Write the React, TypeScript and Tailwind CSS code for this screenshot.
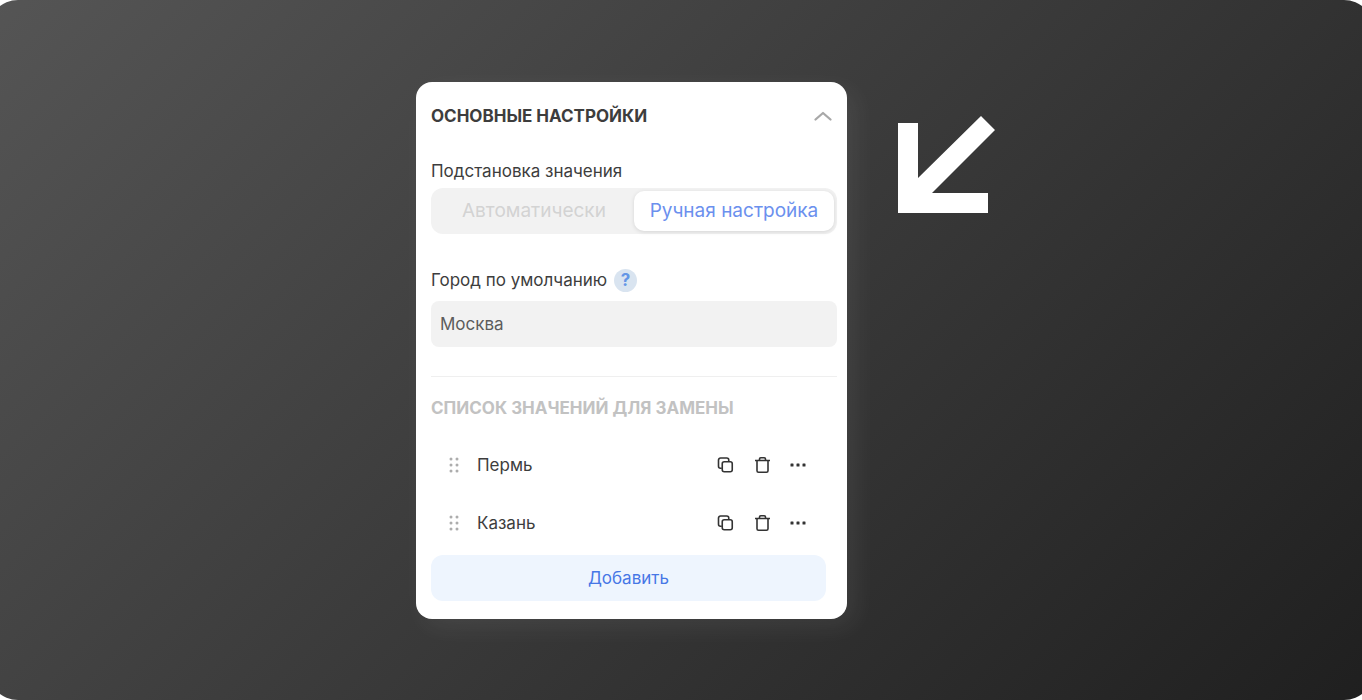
import { useState } from "react";

const CITIES = ["Пермь", "Казань"];

function ChevronUpIcon() {
  return (
    <svg width="20" height="12" viewBox="0 0 20 12" fill="none" aria-hidden>
      <path d="M2.5 9.5 10 3l7.5 6.5" stroke="#a8a8a8" strokeWidth="2.3" strokeLinecap="round" strokeLinejoin="round" />
    </svg>
  );
}

function CopyIcon() {
  return (
    <svg width="18" height="18" viewBox="0 0 18 18" fill="none" stroke="#333333" strokeWidth="1.6" aria-hidden>
      <rect x="5.25" y="5.75" width="10" height="10" rx="2" />
      <path d="M4.75 12.25H3.5a2 2 0 0 1-2-2V4a2 2 0 0 1 2-2h6.25a2 2 0 0 1 2 2v1.5" />
    </svg>
  );
}

function TrashIcon() {
  return (
    <svg width="18" height="18" viewBox="0 0 18 18" fill="none" stroke="#333333" strokeWidth="1.6" aria-hidden>
      <path d="M2 4.5h15M4 4.5v10.25a1.5 1.5 0 0 0 1.5 1.5h8a1.5 1.5 0 0 0 1.5-1.5V4.5" />
      <path d="M6.5 4.25V3a1.25 1.25 0 0 1 1.25-1.25h3.5A1.25 1.25 0 0 1 12.5 3v1.25" />
    </svg>
  );
}

function MoreIcon() {
  return (
    <svg width="18" height="18" viewBox="0 0 18 18" fill="#333333" aria-hidden>
      <rect x="1.5" y="7.5" width="3" height="3" rx="0.5" />
      <rect x="7.5" y="7.5" width="3" height="3" rx="0.5" />
      <rect x="13.5" y="7.5" width="3" height="3" rx="0.5" />
    </svg>
  );
}

function DragIcon() {
  return (
    <svg width="10" height="16" viewBox="0 0 10 16" fill="#adadad" aria-hidden>
      {[2, 8, 14].map((y) => (
        <g key={y}>
          <circle cx="2" cy={y} r="1.5" />
          <circle cx="8" cy={y} r="1.5" />
        </g>
      ))}
    </svg>
  );
}

function CityRow({ name }: { name: string }) {
  return (
    <li className="flex h-[58px] items-center pr-[30px] pl-[18px]">
      <button type="button" aria-label="Переместить" className="cursor-grab">
        <DragIcon />
      </button>
      <span className="ml-[18px] flex-1">{name}</span>
      <div className="flex gap-[18px]">
        <button type="button" aria-label="Копировать">
          <CopyIcon />
        </button>
        <button type="button" aria-label="Удалить">
          <TrashIcon />
        </button>
        <button type="button" aria-label="Ещё">
          <MoreIcon />
        </button>
      </div>
    </li>
  );
}

export default function App() {
  const [manual, setManual] = useState(true);
  const [city, setCity] = useState("Москва");

  return (
    <div className="overflow-hidden bg-white font-['Inter',sans-serif]">
      <main className="-mx-3 grid min-h-screen grid-cols-[21fr_431px_26fr] items-start rounded-[30px] bg-[linear-gradient(135deg,#555555,#1f1f1f)] px-3 pt-[82px] pb-16">
        <section className="col-start-2 rounded-2xl bg-white pt-5 pr-[10px] pb-[18px] pl-[15px] text-[17px] leading-7 text-[#3d3d3d] shadow-[8px_8px_24px_rgba(255,255,255,0.07)]">
          <div className="flex items-center justify-between pr-1">
            <h2 className="font-bold">ОСНОВНЫЕ НАСТРОЙКИ</h2>
            <button type="button" aria-label="Свернуть">
              <ChevronUpIcon />
            </button>
          </div>

          <h3 className="mt-[27px]">Подстановка значения</h3>
          <div className="mt-[3px] grid h-[46px] grid-cols-2 rounded-xl bg-[#f2f2f2] p-[3px] text-[19px]">
            <button
              type="button"
              aria-pressed={!manual}
              onClick={() => setManual(false)}
              className={manual ? "text-[#d3d3d3]" : "rounded-[10px] bg-white text-[#6b90ee] shadow-[0_1px_4px_rgba(0,0,0,0.12)]"}
            >
              Автоматически
            </button>
            <button
              type="button"
              aria-pressed={manual}
              onClick={() => setManual(true)}
              className={manual ? "rounded-[10px] bg-white text-[#6b90ee] shadow-[0_1px_4px_rgba(0,0,0,0.12)]" : "text-[#d3d3d3]"}
            >
              Ручная настройка
            </button>
          </div>

          <div className="mt-8 flex items-center gap-[7px]">
            <label htmlFor="city">Город по умолчанию</label>
            <button type="button" aria-label="Подсказка" className="size-[23px] rounded-full bg-[#d9e4f0] text-[17px] leading-[23px] font-bold text-[#6496e6]">
              ?
            </button>
          </div>
          <input
            id="city"
            value={city}
            onChange={(e) => setCity(e.target.value)}
            className="mt-[7px] block h-[46px] w-full rounded-lg bg-[#f2f2f2] px-[9px] text-[#5c5c5c] outline-none"
          />

          <hr className="mt-[29px] border-[#efefef]" />

          <h2 className="mt-[17px] font-bold text-[#c2c2c2]">СПИСОК ЗНАЧЕНИЙ ДЛЯ ЗАМЕНЫ</h2>
          <ul className="mt-[14px]">
            {CITIES.map((name) => (
              <CityRow key={name} name={name} />
            ))}
          </ul>
          <div className="mt-[3px] pr-[11px]">
            <button type="button" className="h-[46px] w-full rounded-xl bg-[#eef5fe] text-[#4677e6]">
              Добавить
            </button>
          </div>
        </section>

        <svg className="mt-[34px] ml-[51px]" width="98" height="98" viewBox="0 0 98 98" fill="#ffffff" aria-hidden>
          <path d="M0 7h20v55L83 0l14 14-63 63h56v20H0z" />
        </svg>
      </main>
    </div>
  );
}
